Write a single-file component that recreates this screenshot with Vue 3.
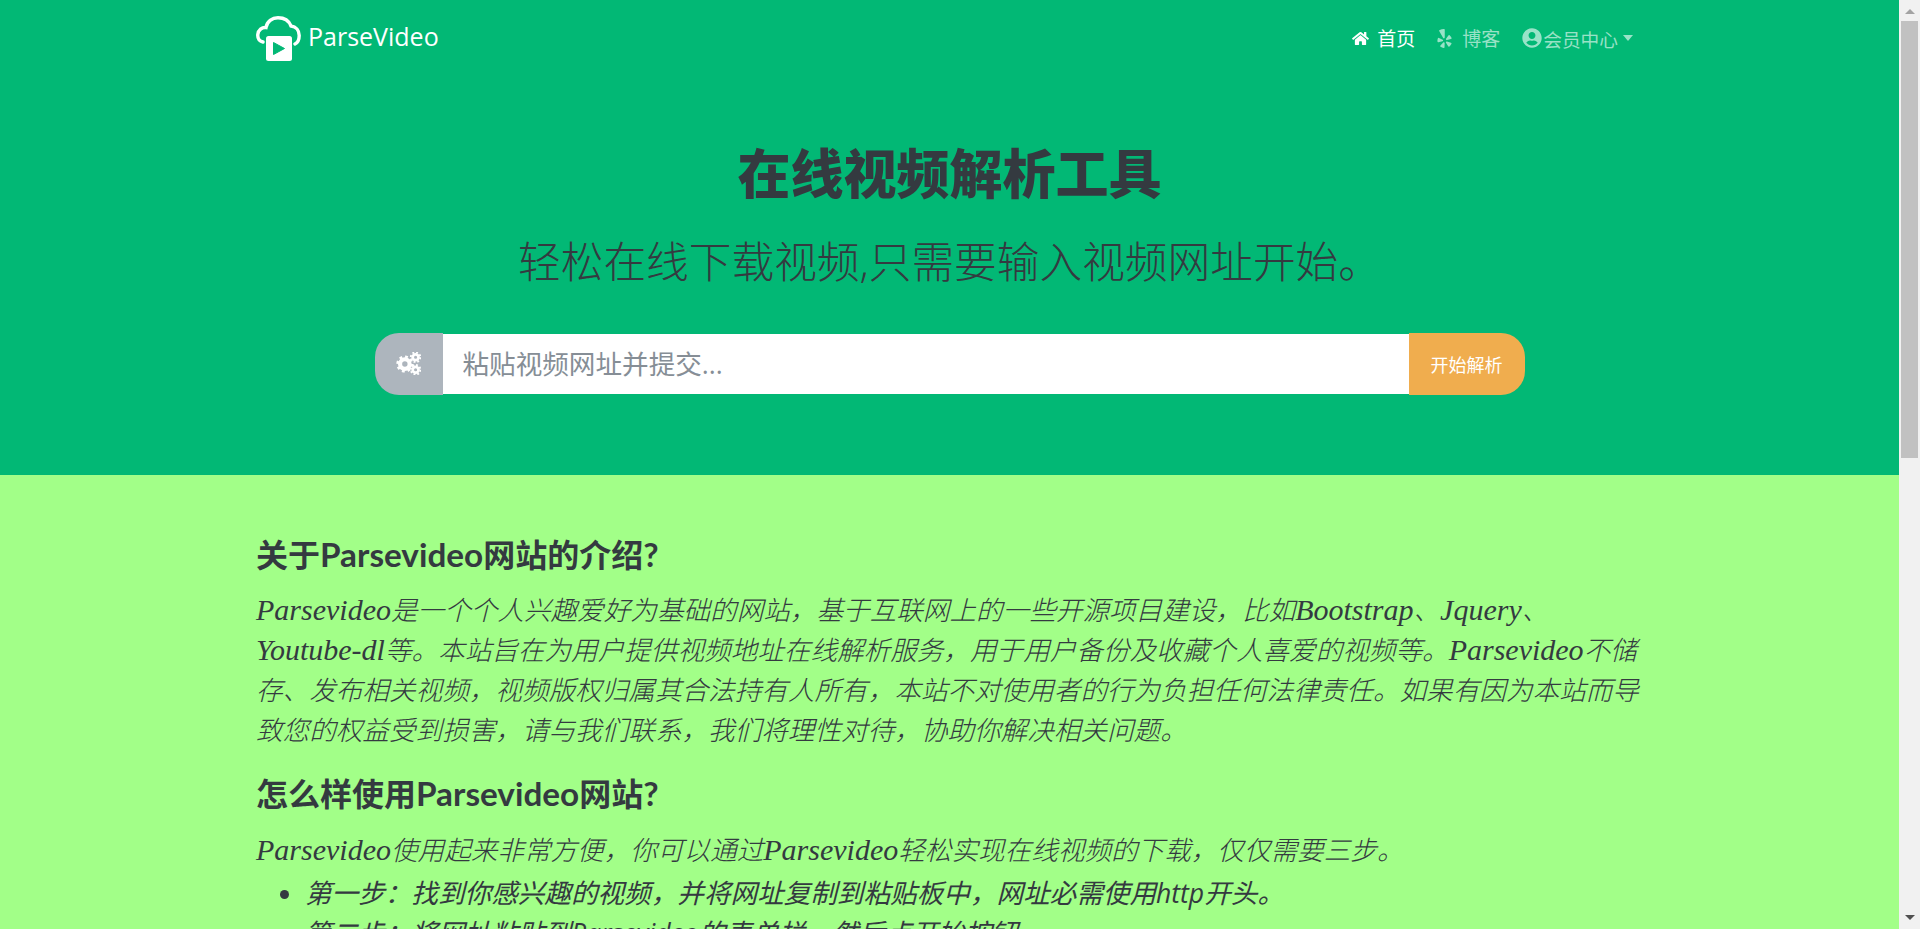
<script setup>
const steps = [
  '第一步：找到你感兴趣的视频，并将网址复制到粘贴板中，网址必需使用http开头。',
  '第二步：将网址粘贴到Parsevideo的表单栏，然后点开始按钮。'
]
</script>

<template>
  <div class="page">
    <div class="main">
      <section class="hero">
        <nav class="nav">
          <div class="brand">
            <svg class="logo" viewBox="0 0 45 45" width="45" height="45">
              <path d="M7 26C3 25 1.500 22 1.800 18.500 2.200 14 6 11 10 11.500 11 5.500 16 1.800 22 1.800 28 1.800 33 5 35 10 40 10.500 43.200 14.500 43.200 19.500 43.200 23 42 26.500 39 28" fill="none" stroke="#fff" stroke-width="3.400" stroke-linecap="round"/>
              <rect x="10" y="20" width="26" height="25" rx="2.500" fill="#fff"/>
              <path d="M17.500 26.500 28.500 32.500 17.500 38.500Z" fill="#02b875" stroke="#02b875" stroke-linejoin="round"/>
            </svg>
            <span class="brand-name">ParseVideo</span>
          </div>
          <ul class="links">
            <li class="link active">
              <svg class="ic" viewBox="0 0 576 512" width="17" height="15"><path fill="currentColor" d="M280.400 148.300 96 300.100V464a16 16 0 0 0 16 16l112.100-.3a16 16 0 0 0 15.900-16V368a16 16 0 0 1 16-16h64a16 16 0 0 1 16 16v95.600a16 16 0 0 0 16 16.100L464 480a16 16 0 0 0 16-16V300L295.700 148.300a12.200 12.200 0 0 0-15.300 0zM571.600 251.500 488 182.600V44.100a12 12 0 0 0-12-12h-56a12 12 0 0 0-12 12v72.600L318.500 43a48 48 0 0 0-61 0L4.300 251.500a12 12 0 0 0-1.600 16.900l25.500 31A12 12 0 0 0 45.200 301l235.200-193.700a12.200 12.200 0 0 1 15.300 0L530.900 301a12 12 0 0 0 16.900-1.600l25.500-31a12 12 0 0 0-1.700-16.900z"/></svg>
              <span>首页</span>
            </li>
            <li class="link blog">
              <svg class="ic" viewBox="0 0 384 512" width="15" height="19"><path fill="currentColor" d="M42.900 240.320l99.620 48.610c19.200 9.400 16.200 37.510-4.500 42.710L30.500 358.450a22.790 22.790 0 0 1-28.210-19.600 197.160 197.160 0 0 1 9-85.320 22.800 22.800 0 0 1 31.610-13.210zm44 239.250a199.450 199.450 0 0 0 79.420 32.110A22.780 22.780 0 0 0 192.940 490l3.900-110.820c.7-21.300-25.500-31.910-39.810-16.100l-74.210 82.400a22.820 22.820 0 0 0 4.090 34.090zm145.340-109.920l58.810 94a22.930 22.930 0 0 0 34 5.500 198.360 198.360 0 0 0 52.710-67.610A23 23 0 0 0 364.170 370l-105.420-34.260c-20.310-6.500-37.810 15.800-26.510 33.910zm148.330-132.230a197.440 197.440 0 0 0-50.410-69.310 22.850 22.850 0 0 0-34 4.400l-62 91.920c-11.900 17.700 4.700 40.610 25.200 34.710L366 268.630a23 23 0 0 0 14.610-31.210zM62.110 30.180a22.860 22.860 0 0 0-9.900 32l104.120 180.440c11.700 20.200 42.610 11.900 42.610-11.400V22.880a22.670 22.670 0 0 0-24.500-22.800 320.370 320.370 0 0 0-112.330 30.100z"/></svg>
              <span>博客</span>
            </li>
            <li class="link member">
              <svg class="ic" viewBox="0 0 496 512" width="20" height="20"><path fill="currentColor" d="M248 8C111 8 0 119 0 256s111 248 248 248 248-111 248-248S385 8 248 8zm0 96c48.600 0 88 39.400 88 88s-39.400 88-88 88-88-39.400-88-88 39.400-88 88-88zm0 344c-58.700 0-111.300-26.600-146.500-68.200 18.800-35.400 55.600-59.800 98.500-59.800 2.400 0 4.800.4 7.100 1.100 13 4.200 26.600 6.900 40.900 6.900 14.300 0 28-2.700 40.900-6.900 2.300-.7 4.700-1.100 7.100-1.100 42.900 0 79.700 24.400 98.500 59.800C359.300 421.400 306.700 448 248 448z"/></svg>
              <span>会员中心</span>
              <i class="caret"></i>
            </li>
          </ul>
        </nav>
        <h1 class="title">在线视频解析工具</h1>
        <p class="subtitle">轻松在线下载视频,只需要输入视频网址开始。</p>
        <form class="search" @submit.prevent>
          <span class="prepend">
            <svg viewBox="0 0 24 22" width="25" height="23">
              <g fill="none" stroke="#fff">
                <circle cx="8.500" cy="11.500" r="4.600" stroke-width="4"/>
                <circle cx="8.500" cy="11.500" r="7" stroke-width="2.400" stroke-dasharray="2.700 2.800"/>
                <circle cx="18.800" cy="5" r="2.800" stroke-width="2.600"/>
                <circle cx="18.800" cy="5" r="4.600" stroke-width="1.800" stroke-dasharray="1.800 1.800"/>
                <circle cx="18.800" cy="17" r="2.800" stroke-width="2.600"/>
                <circle cx="18.800" cy="17" r="4.600" stroke-width="1.800" stroke-dasharray="1.800 1.800"/>
              </g>
            </svg>
          </span>
          <input class="input" placeholder="粘贴视频网址并提交..." />
          <button class="submit" type="submit">开始解析</button>
        </form>
      </section>
      <section class="content">
        <h3>关于<span class="hen">Parsevideo</span>网站的介绍<span class="hen">?</span></h3>
        <p><span class="en">Parsevideo</span>是一个个人兴趣爱好为基础的网站，基于互联网上的一些开源项目建设，比如<span class="en">Bootstrap</span>、<span class="en">Jquery</span>、<span class="en">Youtube-dl</span>等。本站旨在为用户提供视频地址在线解析服务，用于用户备份及收藏个人喜爱的视频等。<span class="en">Parsevideo</span>不储存、发布相关视频，视频版权归属其合法持有人所有，本站不对使用者的行为负担任何法律责任。如果有因为本站而导致您的权益受到损害，请与我们联系，我们将理性对待，协助你解决相关问题。</p>
        <h3>怎么样使用<span class="hen">Parsevideo</span>网站<span class="hen">?</span></h3>
        <p class="intro"><span class="en">Parsevideo</span>使用起来非常方便，你可以通过<span class="en">Parsevideo</span>轻松实现在线视频的下载，仅仅需要三步。</p>
        <ul class="steps">
          <li v-for="s in steps" :key="s">{{ s }}</li>
        </ul>
      </section>
    </div>
    <aside class="scrollbar">
      <i class="arrow up"></i>
      <div class="thumb"></div>
      <div class="track"></div>
      <i class="arrow down"></i>
    </aside>
  </div>
</template>

<style scoped>
.page {
  display: flex;
  height: 929px;
  overflow: hidden;
  font-family: "Open Sans", "Noto Sans CJK SC", sans-serif;
  color: #343a40;
}
.main {
  flex: 1;
  min-width: 0;
  overflow: hidden;
}
.hero {
  height: 475px;
  background: #02b875;
  box-sizing: border-box;
  display: flex;
  flex-direction: column;
  align-items: center;
}
.nav {
  width: 1387px;
  height: 76px;
  padding-right: 10px;
  box-sizing: border-box;
  display: flex;
  align-items: center;
  justify-content: space-between;
}
.brand {
  display: flex;
  align-items: center;
  gap: 7px;
  color: #fff;
}
.brand-name {
  font-size: 25px;
  margin-top: -4px;
}
.links {
  display: flex;
  list-style: none;
  margin: 0;
  padding: 0;
  gap: 22px;
}
.link {
  display: flex;
  align-items: center;
  gap: 8px;
  font-size: 19px;
  color: rgba(255, 255, 255, 0.6);
}
.link.active {
  color: #fff;
}
.blog {
  gap: 10px;
}
.member {
  gap: 1px;
  font-size: 18.7px;
}
.caret {
  width: 0;
  height: 0;
  margin-left: 4px;
  border-top: 6px solid currentColor;
  border-left: 5px solid transparent;
  border-right: 5px solid transparent;
}
.title {
  margin: 66px 0 0;
  font-size: 53px;
  line-height: 1.2;
  font-weight: 900;
  color: #343a40;
}
.subtitle {
  margin: 30px 0 0;
  font-size: 42.7px;
  line-height: 1.2;
  font-weight: 300;
  color: #343a40;
}
.search {
  display: flex;
  width: 1150px;
  height: 62px;
  margin-top: 46px;
}
.prepend {
  width: 68px;
  background: #adb5bd;
  border-radius: 24px 0 0 24px;
  display: flex;
  align-items: center;
  justify-content: center;
}
.input {
  flex: 1;
  min-width: 0;
  border: 0;
  outline: 0;
  margin: 1px 0;
  padding: 0 20px;
  font-size: 26.6px;
  font-family: inherit;
  color: #495057;
  background: #fff;
}
.input::placeholder {
  color: #868e96;
}
.submit {
  width: 116px;
  border: 0;
  background: #f0ad4e;
  color: #fff;
  font-size: 18px;
  font-family: inherit;
  border-radius: 0 24px 24px 0;
}
.content {
  background: #a2ff88;
  min-height: 454px;
  padding: 61px 0 0 256px;
  box-sizing: border-box;
}
.content > * {
  width: 1387px;
}
h3 {
  margin: 0 0 17px;
  font-family: Lato, "Noto Sans CJK SC", sans-serif;
  font-size: 32px;
  line-height: 1.2;
  font-weight: 700;
  color: #343a40;
}
.hen {
  font-size: 33.3px;
  line-height: 1;
}
.content p {
  margin: 0 0 24px;
  font-family: "Liberation Serif", "Noto Sans CJK SC", serif;
  font-style: italic;
  font-weight: 300;
  font-size: 26.6px;
  line-height: 40px;
  color: #343a40;
}
.content p.intro {
  margin: 0 0 2px;
}
.en {
  font-size: 30px;
  font-weight: 400;
  line-height: 1;
  white-space: nowrap;
}
.steps {
  margin: 0;
  padding-left: 49px;
  box-sizing: border-box;
  font-style: italic;
  font-size: 26.6px;
  line-height: 40px;
}
.scrollbar {
  width: 21px;
  flex: none;
  background: #f1f1f1;
  display: flex;
  flex-direction: column;
  align-items: center;
}
.arrow {
  width: 0;
  height: 0;
  border-left: 5px solid transparent;
  border-right: 5px solid transparent;
  margin: 9px 0 7px;
}
.arrow.up {
  border-bottom: 5px solid #a3a3a3;
}
.arrow.down {
  border-top: 5px solid #505050;
  margin: 7px 0 9px;
}
.thumb {
  width: 17px;
  height: 437px;
  background: #c1c1c1;
}
.track {
  flex: 1;
}
</style>

<style>
html, body {
  margin: 0;
  overflow: hidden;
}
</style>
